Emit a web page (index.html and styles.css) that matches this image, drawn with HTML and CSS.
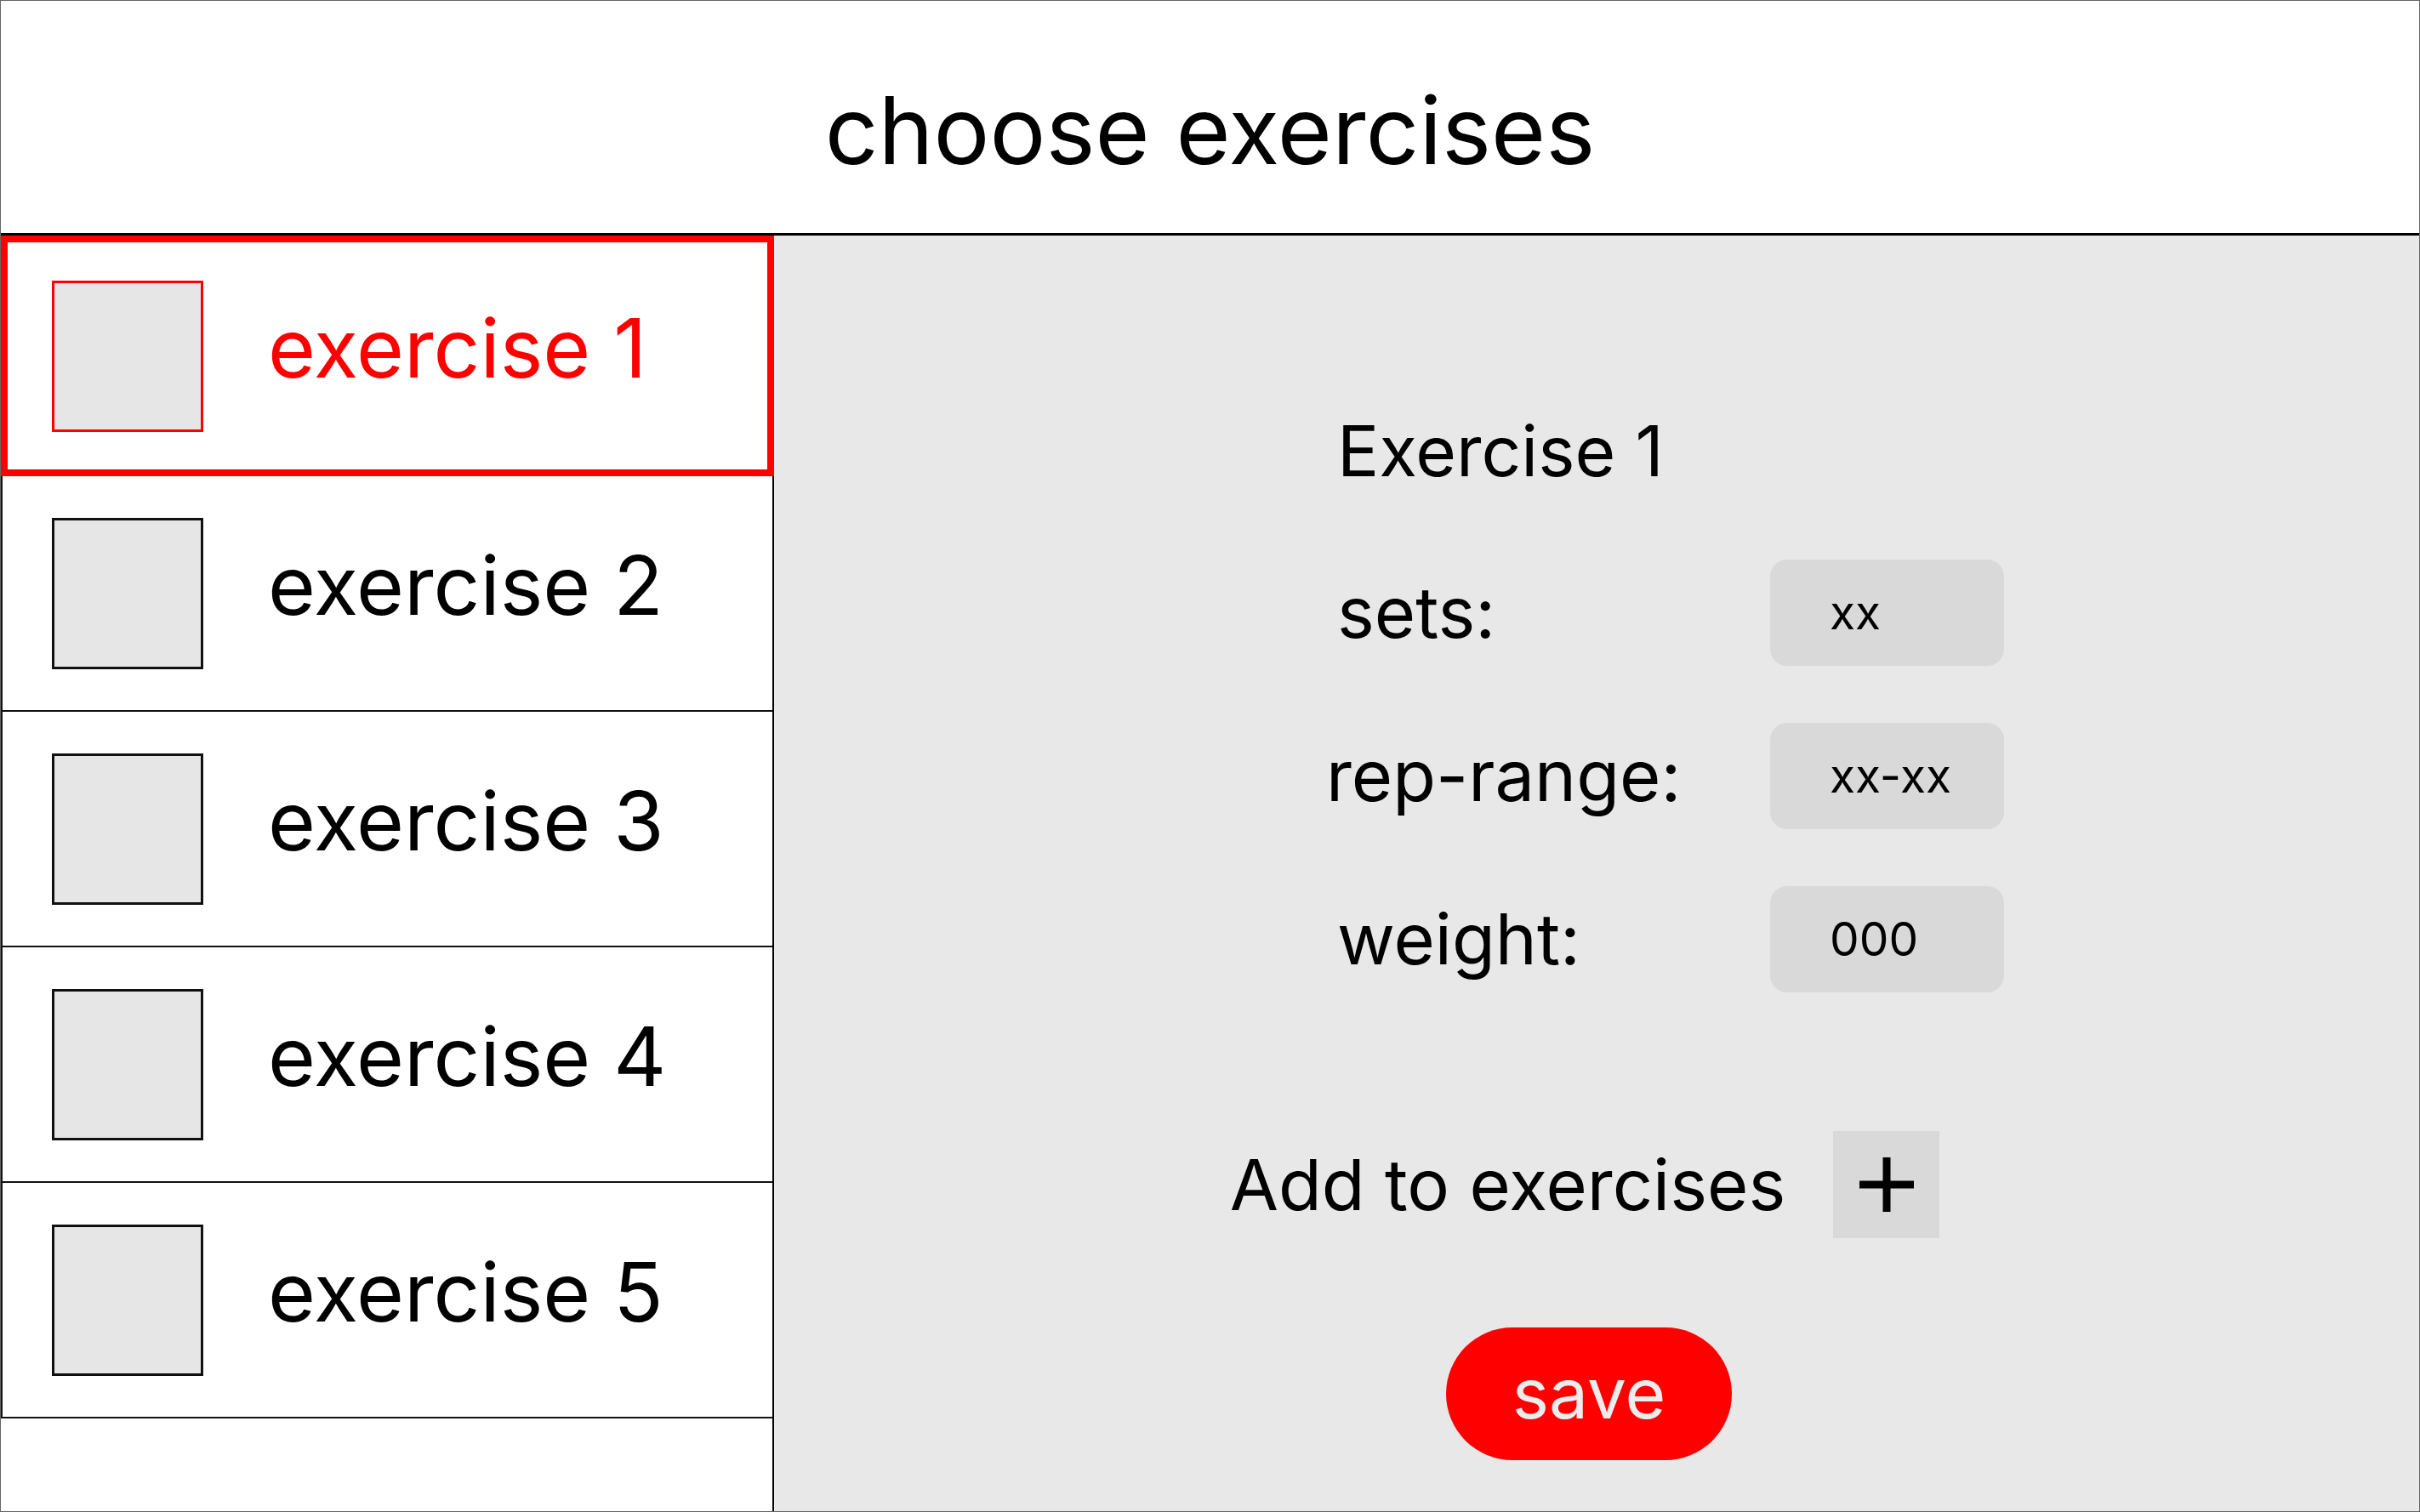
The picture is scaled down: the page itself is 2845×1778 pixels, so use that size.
FILE: index.html
```html
<!DOCTYPE html>
<html lang="en">
<head>
<meta charset="utf-8">
<title>choose exercises</title>
<link rel="stylesheet" href="styles.css">
</head>
<body>
<div class="screen">
  <header class="topbar">
    <h1 class="title">choose exercises</h1>
  </header>
  <main class="content">
    <ul class="exercise-list">
      <li class="exercise-item is-selected"><span class="thumb"></span><span class="exercise-name">exercise 1</span></li>
      <li class="exercise-item"><span class="thumb"></span><span class="exercise-name">exercise 2</span></li>
      <li class="exercise-item"><span class="thumb"></span><span class="exercise-name">exercise 3</span></li>
      <li class="exercise-item"><span class="thumb"></span><span class="exercise-name">exercise 4</span></li>
      <li class="exercise-item"><span class="thumb"></span><span class="exercise-name">exercise 5</span></li>
    </ul>
    <section class="details">
      <div class="form">
        <h2 class="form-title">Exercise 1</h2>
        <div class="field"><span class="field-label">sets:</span><span class="field-input">xx</span></div>
        <div class="field"><span class="field-label field-label--shift">rep-range:</span><span class="field-input">xx-xx</span></div>
        <div class="field"><span class="field-label">weight:</span><span class="field-input">000</span></div>
      </div>
      <div class="add-row">
        <span class="add-text">Add to exercises</span>
        <button class="add-btn" type="button" aria-label="add">
          <svg class="plus-icon" viewBox="0 0 64 64" width="64" height="64"><path d="M32 0V64M0 32H64" stroke="#000" stroke-width="9" fill="none"/></svg>
        </button>
      </div>
      <button class="save-btn" type="button">save</button>
    </section>
  </main>
</div>
</body>
</html>
```

FILE: styles.css
```css
* { box-sizing: border-box; }

html, body {
  margin: 0;
  padding: 0;
  background: #ffffff;
}

body {
  font-family: Inter, "Liberation Sans", Arial, sans-serif;
  color: #000;
}

.screen {
  width: 2845px;
  height: 1778px;
  border: 1px solid #666;
  display: flex;
  flex-direction: column;
  overflow: hidden;
}

.topbar {
  height: 276px;
  flex: 0 0 auto;
  border-bottom: 3px solid #000;
  display: flex;
  justify-content: center;
  padding-top: 97px;
}

.title {
  margin: 0;
  font-size: 110px;
  font-weight: 400;
  line-height: 1;
}

.content {
  flex: 1;
  display: flex;
  min-height: 0;
}

.exercise-list {
  list-style: none;
  margin: 0;
  padding: 0;
  width: 909px;
  flex: 0 0 auto;
  border-right: 2px solid #000;
  display: flex;
  flex-direction: column;
}

.exercise-item {
  height: 277px;
  flex: 0 0 auto;
  border-left: 2px solid #111;
  border-bottom: 2px solid #111;
  display: flex;
  align-items: center;
  padding-left: 58px;
}

.exercise-item.is-selected {
  height: 283px;
  border: 8px solid #ff0000;
  padding-left: 52px;
  margin-right: -2px;
  position: relative;
}

.thumb {
  width: 178px;
  height: 178px;
  flex: 0 0 auto;
  background: #e6e6e6;
  border: 3px solid #111;
}

.is-selected .thumb {
  border-color: #ff0000;
}

.exercise-name {
  margin-left: 76px;
  margin-bottom: 20px;
  font-size: 96px;
  line-height: 1;
}

.is-selected .exercise-name {
  color: #ff0000;
}

.details {
  flex: 1;
  background: #e8e8e8;
  display: flex;
  flex-direction: column;
  align-items: center;
  padding: 213px 28px 0 0;
}

.form {
  align-self: flex-start;
  margin-left: 662px;
  display: flex;
  flex-direction: column;
  gap: 67px;
}

.form-title {
  margin: 0 0 19px;
  font-size: 82px;
  font-weight: 400;
  line-height: 1;
}

.field {
  display: flex;
  align-items: center;
  height: 125px;
}

.field-label {
  width: 509px;
  font-size: 83px;
  line-height: 1;
}

.field-label--shift {
  margin-left: -13px;
  width: 522px;
}

.field-input {
  width: 275px;
  height: 125px;
  border-radius: 20px;
  background: #d9d9d9;
  display: flex;
  align-items: center;
  padding-left: 70px;
  font-size: 55px;
  line-height: 1;
}

.add-row {
  margin-top: 163px;
  display: flex;
  align-items: center;
  gap: 56px;
}

.add-text {
  font-size: 83px;
  line-height: 1;
}

.add-btn {
  width: 125px;
  height: 126px;
  border: none;
  padding: 0;
  background: #d9d9d9;
  display: flex;
  align-items: center;
  justify-content: center;
}

.plus-icon {
  display: block;
}

.save-btn {
  margin-top: 105px;
  margin-left: 10px;
  width: 336px;
  height: 156px;
  border: none;
  border-radius: 78px;
  background: #ff0000;
  color: #ececec;
  font-family: Inter, "Liberation Sans", Arial, sans-serif;
  font-size: 82px;
  line-height: 1;
  padding: 0;
}
```
